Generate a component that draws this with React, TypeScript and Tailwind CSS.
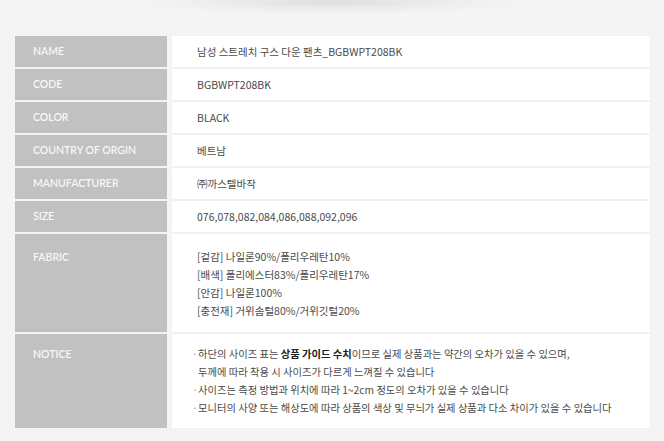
import React from 'react';

const rows: { label: string; value: React.ReactNode }[] = [
  { label: 'NAME', value: '남성 스트레치 구스 다운 팬츠_BGBWPT208BK' },
  { label: 'CODE', value: 'BGBWPT208BK' },
  { label: 'COLOR', value: 'BLACK' },
  { label: 'COUNTRY OF ORGIN', value: '베트남' },
  { label: 'MANUFACTURER', value: '㈜까스텔바작' },
  { label: 'SIZE', value: '076,078,082,084,086,088,092,096' },
];

const fabric = [
  '[겉감] 나일론90%/폴리우레탄10%',
  '[배색] 폴리에스터83%/폴리우레탄17%',
  '[안감] 나일론100%',
  '[충전재] 거위솜털80%/거위깃털20%',
];

const labelCls = "bg-[#c1c1c1] pl-[18px] text-[10.5px] font-semibold text-[#f7f7f7] font-['Lato','Noto_Sans_CJK_KR',sans-serif]";
const valueCls = "bg-white pl-[25px] text-[10.5px] text-[#4a4a4a] font-['Noto_Sans_CJK_KR',sans-serif] shadow-[0_0_2px_rgba(0,0,0,0.05)]";

export default function App() {
  return (
    <div className="w-[664px] h-[441px] bg-[#f4f4f4] overflow-hidden">
      <div className="h-[36px] flex justify-center">
        <div className="w-[380px] h-[24px] -mt-[10px] bg-[radial-gradient(ellipse_at_center,#dedede_0%,#ececec_40%,transparent_72%)]" />
      </div>
      <div className="ml-[15px] w-[636px] grid grid-cols-[152px_478px] gap-x-[5px] gap-y-[2px]">
        {rows.map(r => (
          <React.Fragment key={r.label}>
            <div className={labelCls + ' h-[31px] flex items-center'}>{r.label}</div>
            <div className={valueCls + ' h-[31px] flex items-center'}>{r.value}</div>
          </React.Fragment>
        ))}
        <div className={labelCls + ' h-[98px] pt-[14px] leading-[18px]'}>FABRIC</div>
        <div className={valueCls + ' h-[98px] pt-[14px] leading-[18px]'}>
          {fabric.map(f => <div key={f}>{f}</div>)}
        </div>
        <div className={labelCls + ' h-[94px] pt-[11px] leading-[18px]'}>NOTICE</div>
        <div className={valueCls + ' h-[94px] pt-[11px] leading-[18px] !pl-[20px] !text-[10.3px]'}>
          <div className="flex"><span className="w-[6px] text-[#999]">·</span><span>하단의 사이즈 표는 <b className="font-bold text-[#222]">상품 가이드 수치</b>이므로 실제 상품과는 약간의 오차가 있을 수 있으며,</span></div>
          <div className="pl-[6px]">두께에 따라 착용 시 사이즈가 다르게 느껴질 수 있습니다</div>
          <div className="flex"><span className="w-[6px] text-[#999]">·</span><span>사이즈는 측정 방법과 위치에 따라 1~2cm 정도의 오차가 있을 수 있습니다</span></div>
          <div className="flex"><span className="w-[6px] text-[#999]">·</span><span>모니터의 사양 또는 해상도에 따라 상품의 색상 및 무늬가 실제 상품과 다소 차이가 있을 수 있습니다</span></div>
        </div>
      </div>
    </div>
  );
}
